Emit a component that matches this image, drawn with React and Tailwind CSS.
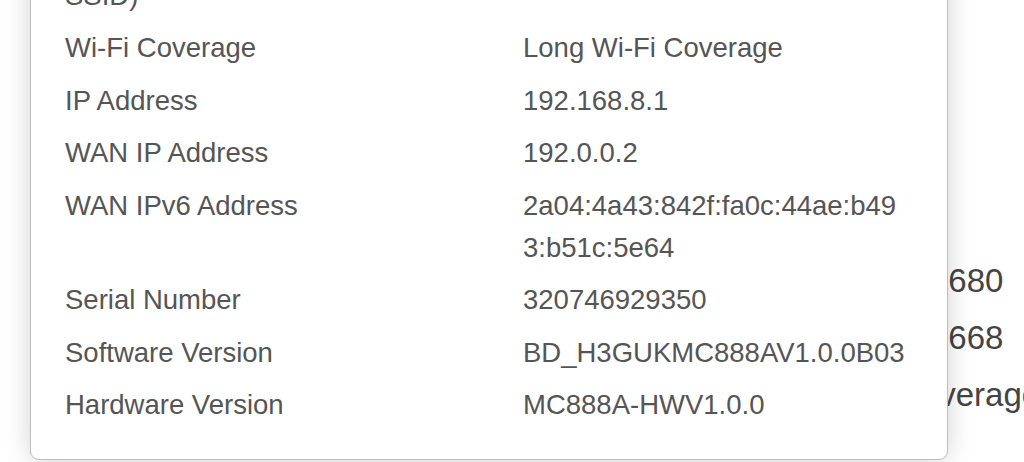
import React from "react";

const rows = [
  { label: ["Wi-Fi Name (", "SSID)"], value: "MC888A-5G" },
  { label: "Wi-Fi Coverage", value: "Long Wi-Fi Coverage" },
  { label: "IP Address", value: "192.168.8.1" },
  { label: "WAN IP Address", value: "192.0.0.2" },
  { label: "WAN IPv6 Address", value: "2a04:4a43:842f:fa0c:44ae:b493:b51c:5e64" },
  { label: "Serial Number", value: "320746929350" },
  { label: "Software Version", value: "BD_H3GUKMC888AV1.0.0B03" },
  { label: "Hardware Version", value: "MC888A-HWV1.0.0" },
];

export default function App() {
  return (
    <div
      className="relative h-[462px] w-[1024px] overflow-hidden bg-white"
      style={{ fontFamily: '"Liberation Sans", Arial, sans-serif' }}
    >
      {/* page behind the dialog */}
      <div className="flex flex-col pt-[252px] text-[33px] leading-[57px] text-[#444]">
        <div className="pl-[930px] whitespace-nowrap">0680</div>
        <div className="pl-[930px] whitespace-nowrap">0668</div>
        <div className="pl-[897px] whitespace-nowrap">Coverage</div>
      </div>

      {/* device info dialog */}
      <div className="absolute left-[30px] bottom-[2px] w-[918px] rounded-b-[9px] border border-[#bdbdbd] bg-white pl-[34px] pr-[38px] pb-[33px] shadow-[0_0_26px_rgba(0,0,0,0.18)]">
        <div className="flex flex-col gap-[10.5px] text-[27.5px] leading-[42px] text-[#555]">
          {rows.map((r, i) => (
            <div key={i} className="grid grid-cols-[458px_385px]">
              <div>
                {Array.isArray(r.label) ? (
                  <>
                    {r.label[0]}
                    <br />
                    {r.label[1]}
                  </>
                ) : (
                  r.label
                )}
              </div>
              <div className="break-all">{r.value}</div>
            </div>
          ))}
        </div>
      </div>
    </div>
  );
}
